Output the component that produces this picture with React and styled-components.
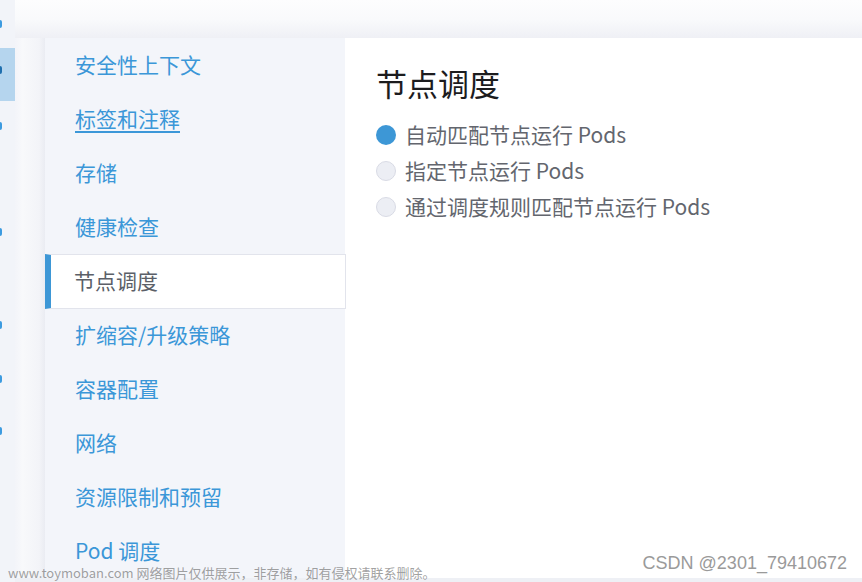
import React from "react";
import styled, { createGlobalStyle } from "styled-components";

const Global = createGlobalStyle`
  html, body { margin: 0; padding: 0; background: #ffffff; }
  body { font-family: "Noto Sans CJK SC", "Noto Sans", sans-serif; overflow: hidden; }
  * { box-sizing: border-box; }
`;

const Page = styled.div`
  position: relative;
  display: flex;
  width: 862px;
  height: 582px;
  overflow: hidden;
`;

const LeftStrip = styled.div`
  position: relative;
  width: 15px;
  flex: none;
  background: #f2f4f9;
  display: flex;
  flex-direction: column;
`;

const StripHighlight = styled.div`
  position: absolute;
  left: 0;
  top: 48px;
  width: 15px;
  height: 53px;
  background: #b5d5ee;
`;

const Mark = styled.span`
  position: relative;
  display: block;
  width: 2px;
  height: 8px;
  margin-top: ${(p) => p.$gap}px;
  background: ${(p) => (p.$dark ? "#1f6fae" : "#3d9be0")};
  border-radius: 0 2px 2px 0;
`;

const RightArea = styled.div`
  flex: 1;
  display: flex;
  flex-direction: column;
`;

const TopShade = styled.div`
  height: 38px;
  flex: none;
  background: linear-gradient(to bottom, #fdfdfe 0%, #f9fafc 50%, #eff0f5 100%);
`;

const Main = styled.div`
  flex: 1;
  display: flex;
  min-height: 0;
`;

const SideShade = styled.div`
  width: 30px;
  flex: none;
  background: linear-gradient(to right, #f3f4f9 0%, #f8f9fb 25%, #f3f4f8 80%, #eaecf2 100%);
`;

const Sidebar = styled.nav`
  width: 300px;
  flex: none;
  background: #f3f5fa;
  display: flex;
  flex-direction: column;
  padding-top: 1px;
  position: relative;
  z-index: 1;
`;

const NavItem = styled.div`
  height: ${(p) => (p.$active ? 55 : 54)}px;
  display: flex;
  align-items: center;
  padding-left: ${(p) => (p.$active ? 23 : 30)}px;
  padding-bottom: 3px;
  font-size: 21px;
  color: ${(p) => (p.$active ? "#5b5f68" : "#3b97d8")};
  text-decoration: ${(p) => (p.$hover ? "underline" : "none")};
  text-underline-offset: 4px;
  text-decoration-thickness: 2px;
  white-space: nowrap;
  ${(p) =>
    p.$active &&
    `
    background: #ffffff;
    border: 1px solid #e2e4ec;
    border-left: 6px solid #3d97d6;
    margin-right: -1px;
    margin-top: -1px;
  `}
`;

const Content = styled.section`
  flex: 1;
  background: #ffffff;
  padding: 24px 0 0 31px;
  display: flex;
  flex-direction: column;
`;

const Title = styled.h2`
  margin: 0 0 12px 0;
  font-size: 31px;
  font-weight: 400;
  line-height: 42px;
  color: #1c1c1e;
`;

const RadioRow = styled.label`
  height: 36px;
  display: flex;
  align-items: center;
  gap: 9px;
  font-size: 21px;
  color: #63666e;
  white-space: nowrap;
`;

const RadioDot = styled.span`
  width: 20px;
  height: 20px;
  border-radius: 50%;
  flex: none;
  margin-top: 2px;
  background: ${(p) => (p.$checked ? "#3d97d6" : "#eceef4")};
  border: ${(p) => (p.$checked ? "none" : "1.5px solid #d9dbe5")};
`;

const BottomBand = styled.div`
  height: 4px;
  flex: none;
  background: #eef0f5;
`;

const WatermarkLeft = styled.div`
  position: absolute;
  left: 8px;
  bottom: 1px;
  font-size: 13px;
  line-height: 17px;
  color: rgba(120, 120, 120, 0.7);
  white-space: nowrap;
  z-index: 2;
`;

const WatermarkRight = styled.div`
  position: absolute;
  right: 15px;
  bottom: 8px;
  font-family: "Liberation Sans", Arial, sans-serif;
  font-size: 18px;
  line-height: 22px;
  color: #9a9a9a;
  white-space: nowrap;
  z-index: 2;
`;

const marks = [
  { gap: 20 },
  { gap: 38, dark: true },
  { gap: 48 },
  { gap: 98 },
  { gap: 85 },
  { gap: 46 },
  { gap: 44 },
];

const navItems = [
  { label: "安全性上下文" },
  { label: "标签和注释", hover: true },
  { label: "存储" },
  { label: "健康检查" },
  { label: "节点调度", active: true },
  { label: "扩缩容/升级策略" },
  { label: "容器配置" },
  { label: "网络" },
  { label: "资源限制和预留" },
  { label: "Pod 调度" },
];

const options = [
  { label: "自动匹配节点运行 Pods", checked: true },
  { label: "指定节点运行 Pods" },
  { label: "通过调度规则匹配节点运行 Pods" },
];

export default function App() {
  return (
    <>
      <Global />
      <Page>
        <LeftStrip>
          <StripHighlight />
          {marks.map((m, i) => (
            <Mark key={i} $gap={m.gap} $dark={m.dark} />
          ))}
        </LeftStrip>
        <RightArea>
          <TopShade />
          <Main>
            <SideShade />
            <Sidebar>
              {navItems.map((n) => (
                <NavItem key={n.label} $active={n.active} $hover={n.hover}>
                  {n.label}
                </NavItem>
              ))}
            </Sidebar>
            <Content>
              <Title>节点调度</Title>
              {options.map((o) => (
                <RadioRow key={o.label}>
                  <RadioDot $checked={o.checked} />
                  {o.label}
                </RadioRow>
              ))}
            </Content>
          </Main>
          <BottomBand />
        </RightArea>
        <WatermarkLeft>www.toymoban.com 网络图片仅供展示，非存储，如有侵权请联系删除。</WatermarkLeft>
        <WatermarkRight>CSDN @2301_79410672</WatermarkRight>
      </Page>
    </>
  );
}
